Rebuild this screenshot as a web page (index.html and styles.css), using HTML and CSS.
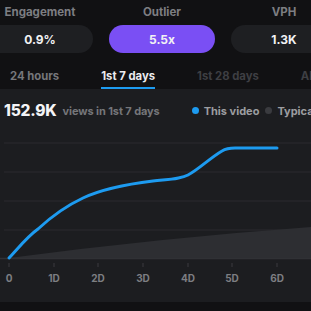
FILE: index.html
```html
<!DOCTYPE html>
<html>
<head>
<meta charset="utf-8">
<link rel="stylesheet" href="styles.css">
</head>
<body>
<div class="metrics">
  <div class="metric"><div class="label">Engagement</div><div class="pill">0.9%</div></div>
  <div class="metric"><div class="label">Outlier</div><div class="pill active">5.5x</div></div>
  <div class="metric"><div class="label">VPH</div><div class="pill">1.3K</div></div>
</div>
<div class="tabs">
  <div class="tab">24 hours</div>
  <div class="tab active">1st 7 days</div>
  <div class="tab dim">1st 28 days</div>
  <div class="tab dim">All time</div>
</div>
<div class="card">
  <div class="head">
    <span class="big">152.9K</span>
    <span class="sub">views in 1st 7 days</span>
    <span class="legend"><i class="dot blue"></i>This video<i class="dot grey"></i>Typical</span>
  </div>
  <svg class="chart" width="311" height="173" viewBox="0 129 311 173">
    <g stroke="#2a2b2f" stroke-width="1.2">
      <line x1="4" y1="143" x2="311" y2="143"/>
      <line x1="4" y1="172" x2="311" y2="172"/>
      <line x1="4" y1="201" x2="311" y2="201"/>
      <line x1="4" y1="230" x2="311" y2="230"/>
    </g>
    <path d="M9 258 Q160 238 311 227 L311 258 Z" fill="#2d2e32"/>
    <line x1="0" y1="258.5" x2="311" y2="258.5" stroke="#303135" stroke-width="1.5"/>
    <path d="M9 258 C20 246 28 236 38 229 C52 216 68 205 83 198 C100 190 120 185 153 181 C172 179 180 179 188 175 C198 170 210 158 222 151 C226 148.5 230 148 235 148 L277 148" fill="none" stroke="#1d9bf0" stroke-width="3" stroke-linecap="round" stroke-linejoin="round"/>
    <g stroke="#3a3b3f" stroke-width="1">
      <line x1="9" y1="263" x2="9" y2="267"/>
      <line x1="54" y1="263" x2="54" y2="267"/>
      <line x1="98" y1="263" x2="98" y2="267"/>
      <line x1="143" y1="263" x2="143" y2="267"/>
      <line x1="188" y1="263" x2="188" y2="267"/>
      <line x1="232" y1="263" x2="232" y2="267"/>
      <line x1="277" y1="263" x2="277" y2="267"/>
    </g>
    <g class="ticks" text-anchor="middle">
      <text x="9" y="282">0</text>
      <text x="54" y="282">1D</text>
      <text x="98" y="282">2D</text>
      <text x="143" y="282">3D</text>
      <text x="188" y="282">4D</text>
      <text x="232" y="282">5D</text>
      <text x="277" y="282">6D</text>
    </g>
  </svg>
</div>
</body>
</html>
```
FILE: styles.css
```css
html, body {
  margin: 0;
  padding: 0;
}
body {
  background: #111113;
  font-family: Inter, "Noto Sans", sans-serif;
  width: 311px;
  height: 311px;
  overflow: hidden;
}
.metrics {
  display: flex;
  gap: 16px;
  margin-left: -13px;
  width: 350px;
}
.metric {
  width: 106px;
  flex: none;
  display: flex;
  flex-direction: column;
  align-items: center;
}
.label {
  height: 25px;
  line-height: 24px;
  font-size: 11.5px;
  font-weight: 700;
  color: #7d7e82;
}
.pill {
  width: 106px;
  height: 28px;
  border-radius: 14px;
  background: #1e1f22;
  color: #f1f1f3;
  font-size: 12px;
  font-weight: 700;
  display: flex;
  align-items: center;
  justify-content: center;
}
.pill.active {
  background: #7a4ff4;
}
.tabs {
  display: flex;
  gap: 42px;
  padding-left: 10px;
  height: 36px;
  white-space: nowrap;
  overflow: hidden;
}
.tab {
  font-size: 11.3px;
  font-weight: 700;
  color: #76777b;
  line-height: 12px;
  padding-top: 17px;
  height: 19px;
  border-bottom: 2px solid transparent;
  box-sizing: content-box;
  flex: none;
}
.tab.active {
  color: #ececef;
  border-bottom-color: #1d9bf0;
  height: 17px;
  padding-top: 17px;
  padding-bottom: 0;
}
.tab.dim {
  color: #3e3f43;
}
.card {
  background: #1c1d20;
  height: 213px;
  overflow: hidden;
}
.head {
  height: 40px;
  display: flex;
  align-items: center;
  padding-left: 4px;
  white-space: nowrap;
  padding-top: 3px;
  box-sizing: border-box;
}
.big {
  font-size: 15.5px;
  font-weight: 800;
  color: #f4f4f6;
  letter-spacing: -0.2px;
}
.sub {
  font-size: 11px;
  font-weight: 700;
  color: #75767a;
  margin-left: 6px;
  letter-spacing: -0.1px;
}
.legend {
  display: flex;
  align-items: center;
  margin-left: 32px;
  font-size: 11px;
  font-weight: 700;
  color: #9c9da1;
}
.dot {
  display: inline-block;
  width: 7px;
  height: 7px;
  border-radius: 50%;
  margin-right: 5px;
}
.dot.blue {
  background: #1d9bf0;
}
.dot.grey {
  background: #3a3b3f;
  margin-left: 6px;
}
.chart {
  display: block;
}
.ticks text {
  font-family: Inter, sans-serif;
  font-size: 10px;
  font-weight: 700;
  fill: #7d7e82;
}
```
